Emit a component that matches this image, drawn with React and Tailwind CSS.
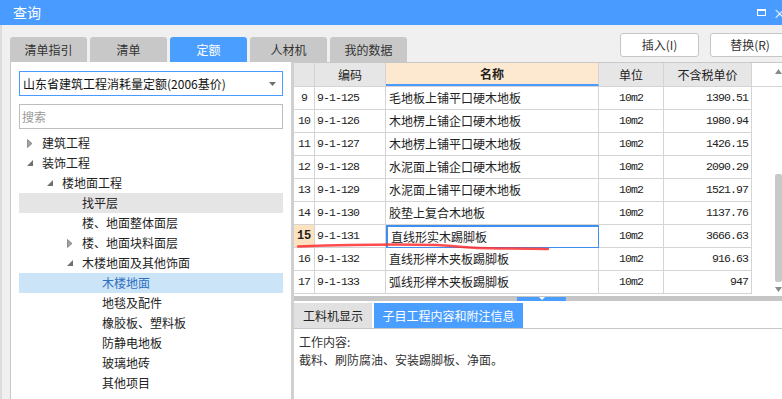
import React from "react";

const cjk = { fontFamily: '"Noto Sans CJK SC", "Noto Sans", sans-serif' };
const mono = { fontFamily: '"Liberation Mono", "Noto Sans CJK SC", monospace', fontSize: 11.5, letterSpacing: "-0.9px" };

const topTabs = ["清单指引", "清单", "定额", "人材机", "我的数据"];

const tree = [
  { level: 0, label: "建筑工程", arrow: "closed" },
  { level: 0, label: "装饰工程", arrow: "open" },
  { level: 1, label: "楼地面工程", arrow: "open" },
  { level: 2, label: "找平层", hover: true },
  { level: 2, label: "楼、地面整体面层" },
  { level: 2, label: "楼、地面块料面层", arrow: "closed" },
  { level: 2, label: "木楼地面及其他饰面", arrow: "open" },
  { level: 3, label: "木楼地面", selected: true },
  { level: 3, label: "地毯及配件" },
  { level: 3, label: "橡胶板、塑料板" },
  { level: 3, label: "防静电地板" },
  { level: 3, label: "玻璃地砖" },
  { level: 3, label: "其他项目" },
];

const rows = [
  [9, "9-1-125", "毛地板上铺平口硬木地板", "10m2", "1390.51"],
  [10, "9-1-126", "木地楞上铺企口硬木地板", "10m2", "1980.94"],
  [11, "9-1-127", "木地楞上铺平口硬木地板", "10m2", "1426.15"],
  [12, "9-1-128", "水泥面上铺企口硬木地板", "10m2", "2090.29"],
  [13, "9-1-129", "水泥面上铺平口硬木地板", "10m2", "1521.97"],
  [14, "9-1-130", "胶垫上复合木地板", "10m2", "1137.76"],
  [15, "9-1-131", "直线形实木踢脚板", "10m2", "3666.63"],
  [16, "9-1-132", "直线形榉木夹板踢脚板", "10m2", "916.63"],
  [17, "9-1-133", "弧线形榉木夹板踢脚板", "10m2", "947"],
];

function Arrow({ kind }) {
  if (kind === "closed") {
    return (
      <svg width="6" height="9" viewBox="0 0 6 9">
        <path d="M0.5 0.5 L5 4.5 L0.5 8.5 Z" fill="#a0a0a0" stroke="#808080" strokeWidth="0.8" />
      </svg>
    );
  }
  return (
    <svg width="6" height="6" viewBox="0 0 6 6">
      <path d="M6 0 L6 6 L0 6 Z" fill="#707070" />
    </svg>
  );
}

function TreeRow({ item }) {
  const pad = item.level * 20;
  return (
    <div
      className={
        "relative flex h-[20px] items-center text-[12px] " +
        (item.selected ? "bg-[#cce4f7] text-[#2f6fc0]" : item.hover ? "bg-[#e5e5e5] text-[#222]" : "text-[#222]")
      }
    >
      {item.arrow && (
        <span className="absolute flex h-[20px] items-center" style={{ left: 8 + pad }}>
          <Arrow kind={item.arrow} />
        </span>
      )}
      <span style={{ paddingLeft: 23 + pad }}>{item.label}</span>
    </div>
  );
}

function TableRow({ r }) {
  const [n, code, name, unit, price] = r;
  const sel = n === 15;
  return (
    <div className="flex h-[23px] text-[12px] text-[#222]">
      <div
        className={
          "flex w-[21px] items-center justify-center border-r border-b border-[#d4d4d4] " +
          (sel ? "bg-[#fde2c0] font-bold" : "")
        }
        style={sel ? { ...mono, fontSize: 12, letterSpacing: "-0.3px" } : mono}
      >
        {n}
      </div>
      <div className="flex w-[71px] items-center border-r border-b border-[#d4d4d4] pl-[2px]" style={mono}>
        {code}
      </div>
      <div
        className={
          "flex w-[213px] items-center border-r border-b pl-[3px] " +
          (sel ? "border-2 border-[#3f8ff0] pl-[1px]" : "border-[#d4d4d4]")
        }
      >
        {name}
      </div>
      <div className="flex w-[65px] items-center justify-center border-r border-b border-[#d4d4d4]" style={mono}>
        {unit}
      </div>
      <div className="flex w-[88px] items-center justify-end border-r border-b border-[#d4d4d4] pr-[3px]" style={mono}>
        {price}
      </div>
    </div>
  );
}

export default function App() {
  return (
    <div className="relative flex h-[399px] w-[782px] flex-col overflow-hidden bg-[#f0f0f0]" style={cjk}>
      {/* title bar */}
      <div className="flex h-[25px] shrink-0 items-center bg-[#4a9bff] pl-[13px] text-[14px] text-white">
        <span>查询</span>
        <div className="ml-auto mr-[7px] h-[7px] w-[9px] border border-t-2 border-white" />
        <span className="-mr-[4px] text-[13px] leading-none">×</span>
      </div>

      {/* tabs + buttons */}
      <div className="flex h-[37px] shrink-0 border-l-2 border-[#dcdcdc]">
        <div className="flex items-end gap-[3px] pl-[8px]">
          {topTabs.map((t) => (
            <div
              key={t}
              className={
                "flex h-[25px] w-[77px] items-center justify-center rounded-t-[3px] text-[12px] " +
                (t === "定额" ? "bg-[#4a9eff] text-white" : "bg-[#c8c8c8] text-[#333]")
              }
            >
              {t}
            </div>
          ))}
        </div>
        <div className="ml-auto flex gap-[11px] pt-[8px]">
          <div className="flex h-[24px] w-[79px] items-center justify-center rounded-[3px] border border-[#c6c6c6] bg-white text-[12px] text-[#333]">
            插入(I)
          </div>
          <div className="-mr-[8px] flex h-[24px] w-[80px] items-center justify-center rounded-[3px] border border-[#c6c6c6] bg-white text-[12px] text-[#333]">
            替换(R)
          </div>
        </div>
      </div>

      {/* main */}
      <div className="flex min-h-0 flex-1 border-l-2 border-[#dcdcdc]">
        {/* left panel */}
        <div className="ml-[8px] flex w-[281px] flex-col overflow-hidden border-l border-[#c8c8c8] bg-white px-[8px] pt-[9px]">
          <div className="flex h-[25px] shrink-0 items-center border border-[#4a9bff] pl-[3px] pr-[6px] text-[12px] text-[#111]">
            <span>山东省建筑工程消耗量定额(2006基价)</span>
            <svg className="ml-auto" width="7" height="4" viewBox="0 0 7 4">
              <path d="M0 0 L7 0 L3.5 4 Z" fill="#707070" />
            </svg>
          </div>
          <div className="mt-[8px] flex h-[25px] shrink-0 items-center border border-[#bdbdbd] pl-[2px] text-[12px] text-[#9a9a9a]">
            搜索
          </div>
          <div className="mt-[4px] flex flex-col">
            {tree.map((it) => (
              <TreeRow key={it.label} item={it} />
            ))}
          </div>
        </div>

        {/* right panel */}
        <div className="relative flex flex-1 flex-col border-l-[3px] border-[#d0d0d0] bg-white">
          <div className="h-[233px] shrink-0 border-t border-[#c8c8c8]">
            <div className="flex h-[24px] border-b border-[#d4d4d4] text-[12px] text-[#222]">
              <div className="w-[21px] border-r border-[#d4d4d4] bg-[#e6e6e6]" />
              <div className="flex w-[71px] items-center justify-center border-r border-[#d4d4d4] bg-[#e6e6e6]">编码</div>
              <div className="flex w-[213px] items-center justify-center border-r border-b-2 border-[#d4d4d4] border-b-[#4a9bff] bg-[#fde9cf] font-bold">
                名称
              </div>
              <div className="flex w-[65px] items-center justify-center border-r border-[#d4d4d4] bg-[#e6e6e6]">单位</div>
              <div className="flex w-[88px] items-center justify-center border-r border-[#d4d4d4] bg-[#e6e6e6]">不含税单价</div>
            </div>
            {rows.map((r) => (
              <TableRow key={r[0]} r={r} />
            ))}
          </div>

          {/* scrollbar */}
          <div className="absolute right-0 top-[5px] flex h-[228px] w-[8px] flex-col items-center">
            <svg width="7" height="5" viewBox="0 0 7 5" className="mt-[2px]">
              <path d="M3.5 0 L7 5 L0 5 Z" fill="#8a8a8a" />
            </svg>
            <div className="mt-[100px] h-[108px] w-[7px] rounded-[2px] bg-[#c8c8c8]" />
            <svg width="7" height="5" viewBox="0 0 7 5" className="mt-auto mb-[3px]">
              <path d="M0 0 L7 0 L3.5 5 Z" fill="#8a8a8a" />
            </svg>
          </div>

          {/* splitter */}
          <div className="relative mt-[1px] h-[5px] shrink-0 bg-[#c6c6c6]">
            <div className="absolute left-[223px] top-[1px] flex h-[4px] w-[49px] justify-center bg-[#4a9eff]">
              <svg width="6" height="3" viewBox="0 0 6 3">
                <path d="M0 0 L6 0 L3 3 Z" fill="#ffffff" />
              </svg>
            </div>
          </div>

          {/* bottom tabs */}
          <div className="mt-[2px] flex h-[26px] shrink-0 items-end gap-[2px] border-b border-[#c8c8c8] bg-white">
            <div className="flex h-[25px] w-[78px] items-center justify-center bg-[#e1e1e1] text-[12px] text-[#222]">
              工料机显示
            </div>
            <div className="flex h-[25px] w-[149px] items-center justify-center bg-[#4a9eff] text-[12px] text-white">
              子目工程内容和附注信息
            </div>
          </div>
          <div className="flex-1 pl-[5px] pt-[4px] text-[12px] leading-[18px] text-[#333]">
            <div>工作内容:</div>
            <div>截料、刷防腐油、安装踢脚板、净面。</div>
          </div>
        </div>
      </div>

      {/* red pen mark */}
      <svg className="pointer-events-none absolute left-0 top-0" width="782" height="399">
        <path
          d="M298 246.5 C 340 245, 400 244, 437 245 C 455 246, 470 248.5, 500 248.5 C 520 248.5, 535 248.5, 548 249"
          fill="none"
          stroke="#ff2d2d"
          strokeOpacity="0.85"
          strokeWidth="2.4"
          strokeLinecap="round"
        />
      </svg>
    </div>
  );
}
